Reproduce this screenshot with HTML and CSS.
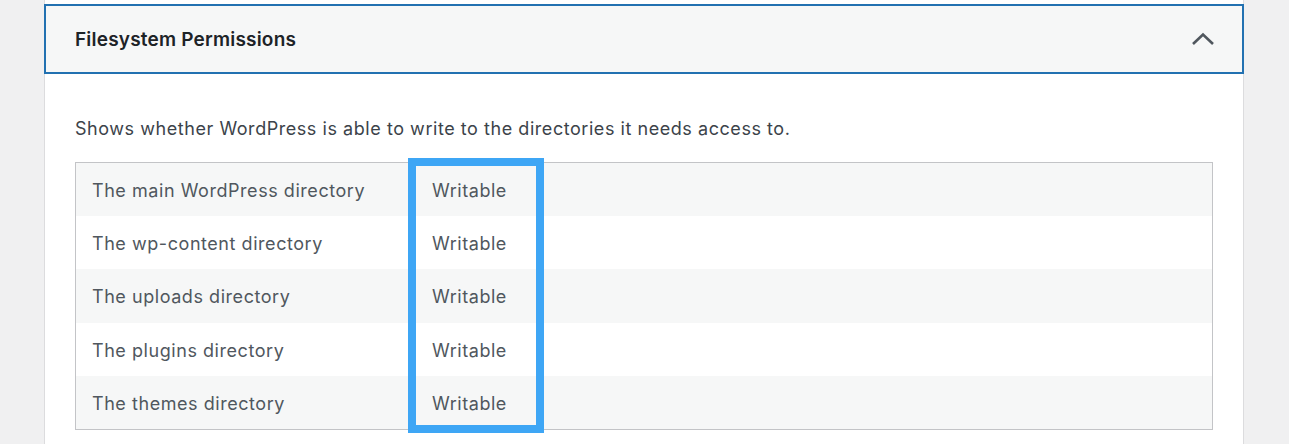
FILE: index.html
```html
<!DOCTYPE html>
<html lang="en">
<head>
<meta charset="utf-8">
<title>Filesystem Permissions</title>
<link rel="stylesheet" href="styles.css">
</head>
<body>
<div class="panel">
  <div class="header">
    <h2 class="title">Filesystem Permissions</h2>
    <svg class="chevron" width="24" height="24" viewBox="0 0 24 24" aria-hidden="true">
      <path d="M2 17 L12 7.5 L22 17" fill="none" stroke="#50575e" stroke-width="2.6"/>
    </svg>
  </div>
  <div class="body">
    <p class="desc">Shows whether WordPress is able to write to the directories it needs access to.</p>
    <div class="table-wrap">
      <table class="perm">
        <tbody>
          <tr><td class="name">The main WordPress directory</td><td class="val">Writable</td><td class="rest"></td></tr>
          <tr><td class="name">The wp-content directory</td><td class="val">Writable</td><td class="rest"></td></tr>
          <tr><td class="name">The uploads directory</td><td class="val">Writable</td><td class="rest"></td></tr>
          <tr><td class="name">The plugins directory</td><td class="val">Writable</td><td class="rest"></td></tr>
          <tr><td class="name">The themes directory</td><td class="val">Writable</td><td class="rest"></td></tr>
        </tbody>
      </table>
      <div class="highlight"></div>
    </div>
  </div>
</div>
</body>
</html>
```

FILE: styles.css
```css
html, body {
  margin: 0;
  padding: 0;
  background: #f0f0f1;
  height: 100%;
  overflow: hidden;
}
body {
  font-family: "Inter", "Liberation Sans", sans-serif;
}
.panel {
  margin-left: 44px;
  width: 1200px;
  box-sizing: border-box;
  border-left: 1px solid #dcdcde;
  border-right: 1px solid #dcdcde;
  background: #fff;
  padding-top: 4px;
  min-height: 100%;
}
.header {
  margin: 0 -1px;
  height: 70px;
  box-sizing: border-box;
  border: 2px solid #2271b1;
  background: #f6f7f7;
  display: flex;
  align-items: center;
  justify-content: space-between;
  padding: 0 27px 0 29px;
}
.title {
  margin: 0;
  font-size: 19px;
  letter-spacing: 0.2px;
  font-weight: 600;
  color: #1d2327;
}
.chevron {
  display: block;
}
.body {
  padding: 0 30px;
}
.desc {
  margin: 0;
  padding-top: 44px;
  height: 88px;
  box-sizing: border-box;
  font-size: 18px;
  letter-spacing: 0.55px;
  line-height: 22px;
  color: #3c434a;
}
.table-wrap {
  position: relative;
}
.perm {
  width: 100%;
  border-collapse: collapse;
  border: 1px solid #c3c4c7;
}
.perm tr {
  height: 53.4px;
}
.perm tr:nth-child(odd) {
  background: #f6f7f7;
}
.perm td {
  padding: 2px 16px 0;
  font-size: 18px;
  letter-spacing: 0.55px;
  color: #50575e;
  vertical-align: middle;
}
.perm td.name {
  width: 308px;
}
.perm td.val {
  width: 88px;
}
.highlight {
  position: absolute;
  left: 333px;
  top: -4px;
  width: 136px;
  height: 275px;
  box-sizing: border-box;
  border: 8px solid #3ea6f5;
}
```
